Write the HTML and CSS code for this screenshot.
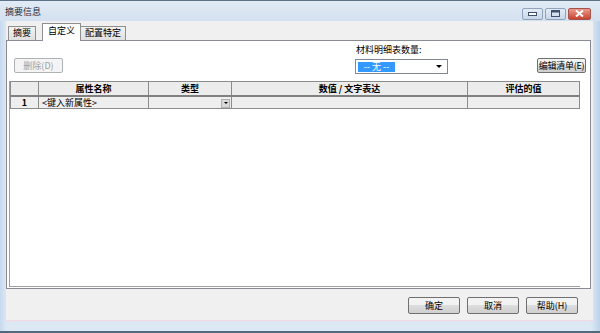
FILE: index.html
```html
<!DOCTYPE html>
<html lang="zh-CN">
<head>
    <meta charset="UTF-8">
    <title>摘要信息</title>
    <link rel="stylesheet" href="styles.css">
</head>
<body>
    <div class="window">
        <div class="titlebar">
            <span class="title">摘要信息</span>
            <div class="caption">
                <span class="cap"><svg width="9" height="4" viewBox="0 0 9 4"><rect x="0.5" y="0.5" width="8" height="3" fill="#fff" stroke="#40506a"/></svg></span>
                <span class="cap"><svg width="9" height="7" viewBox="0 0 9 7"><rect x="0.5" y="0.5" width="8" height="6" fill="none" stroke="#40506a"/><rect x="0.5" y="0.5" width="8" height="2" fill="#40506a"/></svg></span>
                <span class="cap close"><svg width="9" height="7" viewBox="0 0 9 7"><path d="M1 0.5 L8 6.5 M8 0.5 L1 6.5" stroke="#fff" stroke-width="2"/></svg></span>
            </div>
        </div>
        <div class="frame">
            <div class="client">
                <div class="tabs">
                    <span class="tab">摘要</span>
                    <span class="tab active">自定义</span>
                    <span class="tab">配置特定</span>
                </div>
                <div class="panel">
                    <div class="toolbar">
                        <button class="btn disabled">删除(D)</button>
                        <div class="qty">
                            <span class="label">材料明细表数量:</span>
                            <div class="select">
                                <span class="sel">-- 无 --</span>
                                <span class="arrow"></span>
                            </div>
                        </div>
                        <button class="btn edit">编辑清单(E)</button>
                    </div>
                    <div class="grid">
                        <table>
                            <tr class="head">
                                <th class="num"></th>
                                <th class="c1">属性名称</th>
                                <th class="c2">类型</th>
                                <th class="c3">数值 / 文字表达</th>
                                <th class="c4">评估的值</th>
                            </tr>
                            <tr class="row">
                                <th class="num">1</th>
                                <td>&lt;键入新属性&gt;</td>
                                <td class="type"><span class="drop"></span></td>
                                <td></td>
                                <td></td>
                            </tr>
                        </table>
                    </div>
                </div>
                <div class="footer">
                    <button class="btn">确定</button>
                    <button class="btn">取消</button>
                    <button class="btn">帮助(H)</button>
                </div>
            </div>
        </div>
    </div>
</body>
</html>
```

FILE: styles.css
```css
* {
    margin: 0;
    padding: 0;
    box-sizing: border-box;
}

body {
    width: 600px;
    height: 333px;
    overflow: hidden;
    font-family: "Noto Sans CJK SC", "DejaVu Sans", sans-serif;
    font-size: 9px;
    color: #000;
    background: #fff;
}

.window {
    width: 600px;
    height: 333px;
    display: flex;
    flex-direction: column;
    background: #cddcee;
    border-top: 1px solid #5d7389;
    border-bottom: 2px solid #4e6a7c;
}

.titlebar {
    height: 20px;
    display: flex;
    align-items: center;
    justify-content: space-between;
    padding: 0 9px 0 5px;
    background: linear-gradient(#e2ebf6, #d3e0ef);
}

.title {
    font-size: 9px;
    color: #1e2b3a;
}

.caption {
    display: flex;
    gap: 2px;
    margin-top: 5px;
}

.cap {
    width: 21px;
    height: 12px;
    display: flex;
    align-items: center;
    justify-content: center;
    border: 1px solid #8fa3bd;
    border-radius: 2px;
    background: linear-gradient(#e4ecf5, #c8d6e8);
}

.cap.close {
    width: 23px;
    border-color: #a4524a;
    background: linear-gradient(#eb9b8f, #c9432f);
}

.frame {
    flex: 1;
    display: flex;
    padding: 0 9px 10px 6px;
    background: linear-gradient(90deg, #c6d9ee, #dce8f4 6px, #dce8f4 calc(100% - 9px), #bcd2ea);
}

.client {
    flex: 1;
    display: flex;
    flex-direction: column;
    background: #f0f0f0;
    border-bottom: 1px solid #f3d9df;
}

.tabs {
    height: 19px;
    display: flex;
    align-items: flex-end;
    padding-left: 2px;
}

.tab {
    height: 14px;
    padding: 0 4px;
    line-height: 12px;
    border: 1px solid #8e8f8f;
    border-bottom: none;
    background: linear-gradient(#f2f2f2, #e0e0e0);
    margin-right: -1px;
}

.tab:first-child {
    margin-right: 6px;
}

.tab.active {
    height: 18px;
    line-height: 14px;
    padding: 0 5px;
    background: #fff;
    position: relative;
    top: 1px;
    z-index: 1;
}

.panel {
    height: 249px;
    margin-right: 2px;
    background: #fff;
    border: 1px solid #898c95;
    display: flex;
    flex-direction: column;
}

.toolbar {
    height: 40px;
    display: flex;
    align-items: flex-start;
    padding: 17px 4px 0 7px;
}

.btn {
    height: 15px;
    font-family: inherit;
    font-size: 9px;
    color: #000;
    white-space: nowrap;
    border: 1px solid #707070;
    border-radius: 2px;
    background: linear-gradient(#f2f2f2 50%, #dddddd 50%, #cfcfcf);
}

.btn.disabled {
    width: 49px;
    color: #a0a0a0;
    border-color: #adb2b5;
    background: #f4f4f4;
}

.qty {
    display: flex;
    flex-direction: column;
    gap: 4px;
    margin: -14px 0 0 292px;
}

.label {
    line-height: 11px;
    padding-left: 1px;
}

.select {
    width: 93px;
    height: 15px;
    display: flex;
    align-items: center;
    justify-content: space-between;
    border: 1px solid #828790;
    padding: 0 5px 0 2px;
}

.sel {
    width: 37px;
    height: 10px;
    line-height: 10px;
    text-align: center;
    color: #fff;
    background: #3399ff;
}

.arrow {
    width: 0;
    height: 0;
    border-left: 3px solid transparent;
    border-right: 3px solid transparent;
    border-top: 3px solid #000;
}

.btn.edit {
    width: 49px;
    margin-left: auto;
    padding: 0;
    letter-spacing: -0.3px;
    overflow: hidden;
}

.grid {
    flex: 1;
    margin: 0 10px 1px 2px;
    border-left: 1px solid #a0a0a0;
    border-bottom: 1px solid #a0a0a0;
}

table {
    width: 569px;
    border-collapse: collapse;
    table-layout: fixed;
}

th, td {
    border: 1px solid #8c8c8c;
    height: 13px;
    padding: 0 3px;
    font-size: 9px;
    line-height: 11px;
    white-space: nowrap;
    overflow: hidden;
}

.head th {
    height: 14px;
    background: #ececec;
    border-bottom: 2px solid #808080;
}

.num { width: 28px; }
.c1 { width: 110px; }
.c2 { width: 83px; }
.c3 { width: 236px; }
.c4 { width: 112px; }

.row th, .row td {
    background: #eeeeee;
    text-align: left;
}

.row th {
    text-align: center;
}

.type {
    text-align: right !important;
    padding: 0 1px;
}

.drop {
    display: inline-flex;
    width: 9px;
    height: 9px;
    vertical-align: middle;
    align-items: center;
    justify-content: center;
    background: #d8d8d8;
    border: 1px solid #b0b0b0;
}

.drop::after {
    content: "";
    border-left: 2px solid transparent;
    border-right: 2px solid transparent;
    border-top: 2px solid #000;
}

.footer {
    flex: 1;
    display: flex;
    justify-content: flex-end;
    align-items: flex-start;
    gap: 7px;
    padding: 8px 15px 0 0;
}

.footer .btn {
    width: 52px;
    height: 17px;
}
```
